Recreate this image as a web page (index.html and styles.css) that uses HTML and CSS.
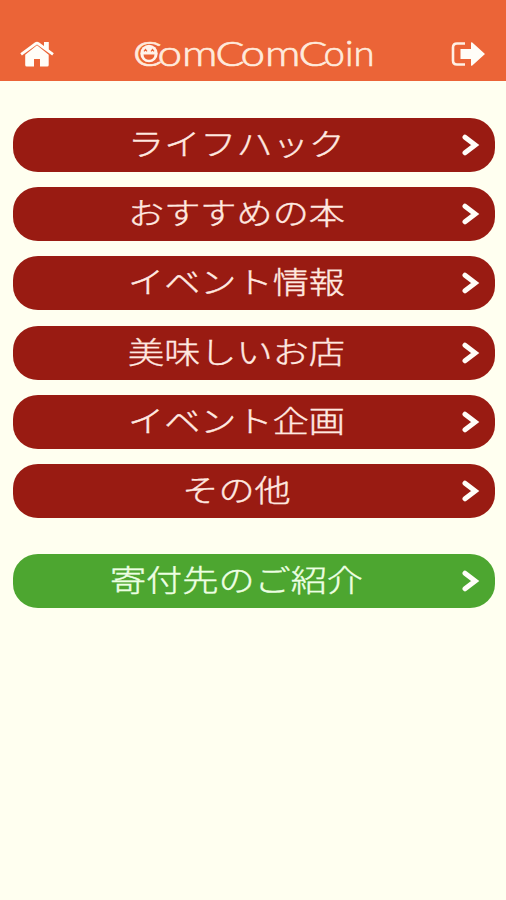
FILE: index.html
```html
<!DOCTYPE html>
<html lang="ja">
<head>
<meta charset="utf-8">
<title>ComComCoin</title>
<link rel="stylesheet" href="styles.css">
</head>
<body>
<header class="header">
  <svg class="home" viewBox="0 0 36 26"><path d="M6.2 13.8 18 4.2l11.7 9.6V24q0 1.500-1.500 1.500H21v-7.600h-6v7.600H7.700Q6.200 25.500 6.200 24Z"/><path d="m1.300 12.300 14.500-10.700q2.200-1.500 4.400 0L25 5V1h4.800v7.600l5 3.700-1.600 2.100L18 3.600 2.900 14.400Z"/></svg>
  <svg class="logo" viewBox="0 0 242 36">
    <g class="cap"><text x="1" y="28" textLength="29" lengthAdjust="spacingAndGlyphs">C</text><text x="83.500" y="28" textLength="29" lengthAdjust="spacingAndGlyphs">C</text><text x="166.500" y="28" textLength="29" lengthAdjust="spacingAndGlyphs">C</text></g>
    <g class="low"><text x="25.500" y="28" textLength="60" lengthAdjust="spacingAndGlyphs">om</text><text x="108.500" y="28" textLength="60" lengthAdjust="spacingAndGlyphs">om</text><text x="191.500" y="28" textLength="51" lengthAdjust="spacingAndGlyphs">oin</text></g>
    <circle class="face" cx="17" cy="15.500" r="8.700"/>
    <path class="mouth" d="M11.500 16.500h11a5.500 5.300 0 0 1-11 0Z"/>
    <path class="eyes" d="m12 13.300 1.500-1.800 1.500 1.800m4 0 1.500-1.800 1.500 1.800"/>
  </svg>
  <svg class="exit" viewBox="0 0 36 26"><path class="frame" d="M15 2.500H7Q3 2.500 3 6.500v13q0 4 4 4h8"/><path d="M10.500 8H21V2q0-1.500 1.300-.4L35 13 22.300 24.400Q21 25.500 21 24v-6H10.500Z"/></svg>
</header>
<main class="menu">
  <a class="item"><span class="label">ライフハック</span><svg class="arrow" viewBox="0 0 18 22"><path d="m3 3.200 10.200 7.800L3 18.800"/></svg></a>
  <a class="item"><span class="label">おすすめの本</span><svg class="arrow" viewBox="0 0 18 22"><path d="m3 3.200 10.200 7.800L3 18.800"/></svg></a>
  <a class="item"><span class="label">イベント情報</span><svg class="arrow" viewBox="0 0 18 22"><path d="m3 3.200 10.200 7.800L3 18.800"/></svg></a>
  <a class="item"><span class="label">美味しいお店</span><svg class="arrow" viewBox="0 0 18 22"><path d="m3 3.200 10.200 7.800L3 18.800"/></svg></a>
  <a class="item"><span class="label">イベント企画</span><svg class="arrow" viewBox="0 0 18 22"><path d="m3 3.200 10.200 7.800L3 18.800"/></svg></a>
  <a class="item"><span class="label">その他</span><svg class="arrow" viewBox="0 0 18 22"><path d="m3 3.200 10.200 7.800L3 18.800"/></svg></a>
  <a class="item donate"><span class="label">寄付先のご紹介</span><svg class="arrow" viewBox="0 0 18 22"><path d="m3 3.200 10.200 7.800L3 18.800"/></svg></a>
</main>
</body>
</html>
```
FILE: styles.css
```css
* { box-sizing: border-box; }
body {
  margin: 0;
  min-height: 900px;
  background: #fffff0;
  font-family: "Noto Sans CJK JP", sans-serif;
}
.header {
  display: flex;
  align-items: flex-end;
  justify-content: space-between;
  height: 81px;
  padding: 0 20px 14px 19px;
  background: #eb6437;
}
.home, .exit { width: 36px; height: 26px; fill: #fffdf8; }
.frame { fill: none; stroke: #fff0e5; stroke-width: 2.6; }
.logo {
  width: 242px;
  height: 36px;
  margin-bottom: -7px;
  overflow: visible;
  fill: #ffeadc;
  font-family: Lato, sans-serif;
  font-weight: 300;
}
.cap, .low { stroke: #ffeadc; stroke-width: 0.7; }
.cap { font-size: 33px; }
.low { font-size: 36px; }
.face { fill: #fff3eb; }
.mouth { fill: #eb6437; }
.eyes { fill: none; stroke: #eb6437; stroke-width: 1.2; }
.menu {
  display: flex;
  flex-direction: column;
  gap: 15.3px;
  padding: 36.7px 11.500px 0 12.500px;
}
.item {
  display: flex;
  align-items: center;
  height: 54px;
  padding-right: 15px;
  border-radius: 25px / 24px;
  background: #991b12;
  color: #ffe9e0;
}
.label {
  flex: 1;
  margin: -6px 2px 0 0;
  text-align: center;
  font-size: 30px;
  line-height: 44px;
  font-weight: 300;
  -webkit-text-stroke: 0.4px currentColor;
  white-space: nowrap;
  transform: scaleX(1.205);
}
.arrow {
  width: 18px;
  height: 22px;
  fill: none;
  stroke: #fffdf8;
  stroke-width: 5;
  stroke-linecap: round;
}
.donate { margin-top: 20.7px; background: #4da630; color: #edffe3; }
```
